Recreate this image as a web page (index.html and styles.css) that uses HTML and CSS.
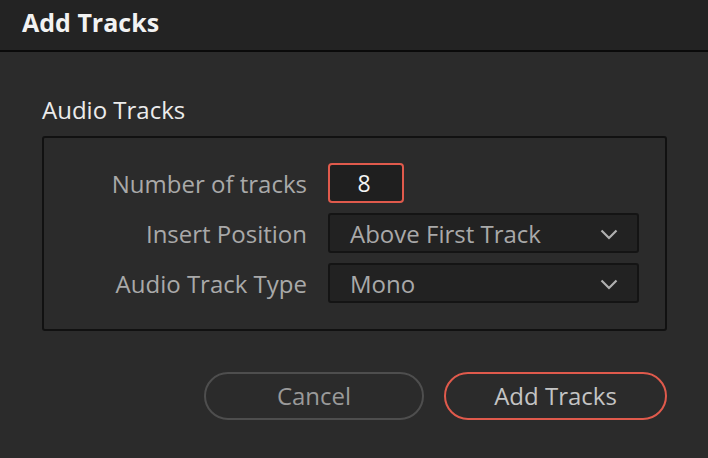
FILE: index.html
```html
<!DOCTYPE html>
<html>
<head>
<meta charset="utf-8">
<link rel="stylesheet" href="styles.css">
</head>
<body>
<div class="dialog">
  <div class="titlebar">Add Tracks</div>
  <div class="content">
    <div class="section-title">Audio Tracks</div>
    <div class="group">
      <div class="row">
        <div class="label">Number of tracks</div>
        <div class="num">8</div>
      </div>
      <div class="row">
        <div class="label">Insert Position</div>
        <div class="select"><span>Above First Track</span>
          <svg class="chev" width="18" height="11" viewBox="0 0 18 11"><path d="M1.5 1.5 L9 9 L16.5 1.5" fill="none" stroke="#b0b0b0" stroke-width="2.2"/></svg>
        </div>
      </div>
      <div class="row">
        <div class="label">Audio Track Type</div>
        <div class="select"><span>Mono</span>
          <svg class="chev" width="18" height="11" viewBox="0 0 18 11"><path d="M1.5 1.5 L9 9 L16.5 1.5" fill="none" stroke="#b0b0b0" stroke-width="2.2"/></svg>
        </div>
      </div>
    </div>
    <div class="buttons">
      <div class="btn cancel">Cancel</div>
      <div class="btn primary">Add Tracks</div>
    </div>
  </div>
</div>
</body>
</html>
```
FILE: styles.css
```css
html, body {
  margin: 0;
  padding: 0;
  background: #2b2b2b;
}
.dialog {
  width: 708px;
  height: 458px;
  font-family: "Open Sans", "Noto Sans", sans-serif;
  background: #2b2b2b;
  overflow: hidden;
}
.titlebar {
  box-sizing: border-box;
  padding-left: 22px;
  background: #232323;
  border-bottom: 2px solid #0a0a0a;
  color: #f2f2f2;
  font-weight: 700;
  font-size: 25px;
  line-height: 44px;
  height: 52px;
}
.content {
  padding: 0 41px 0 42px;
}
.section-title {
  margin-top: 43px;
  color: #ececec;
  font-size: 24px;
  line-height: 30px;
  height: 30px;
}
.group {
  margin-top: 11px;
  height: 195px;
  box-sizing: border-box;
  border: 2px solid #111;
  border-radius: 3px;
  padding: 25px 26px 0 0;
  display: flex;
  flex-direction: column;
  gap: 10px;
}
.row {
  display: flex;
  align-items: center;
  height: 40px;
}
.label {
  width: 263px;
  text-align: right;
  color: #a9a9a9;
  font-size: 24px;
  margin-right: 21px;
  white-space: nowrap;
}
.num {
  width: 76px;
  height: 40px;
  box-sizing: border-box;
  border: 2px solid #e05a4c;
  border-radius: 4px;
  background: #1f1f1f;
  color: #f4f4f4;
  font-size: 23px;
  line-height: 36px;
  text-align: center;
  padding-right: 4px;
}
.select {
  width: 311px;
  height: 40px;
  box-sizing: border-box;
  border: 2px solid #141414;
  border-radius: 3px;
  background: #222;
  color: #a9a9a9;
  font-size: 24px;
  display: flex;
  align-items: center;
  justify-content: space-between;
  padding: 0 19px 0 20px;
}
.chev {
  display: block;
  margin-top: 2px;
}
.buttons {
  margin-top: 41px;
  display: flex;
  justify-content: flex-end;
  gap: 20px;
}
.btn {
  height: 48px;
  box-sizing: border-box;
  border-radius: 24px;
  font-size: 24px;
  line-height: 44px;
  text-align: center;
  color: #b0b0b0;
}
.cancel {
  width: 220px;
  border: 2px solid #4e4e4e;
  color: #9a9a9a;
}
.primary {
  width: 223px;
  border: 2px solid #e05a4c;
  color: #c4c4c4;
}
```
